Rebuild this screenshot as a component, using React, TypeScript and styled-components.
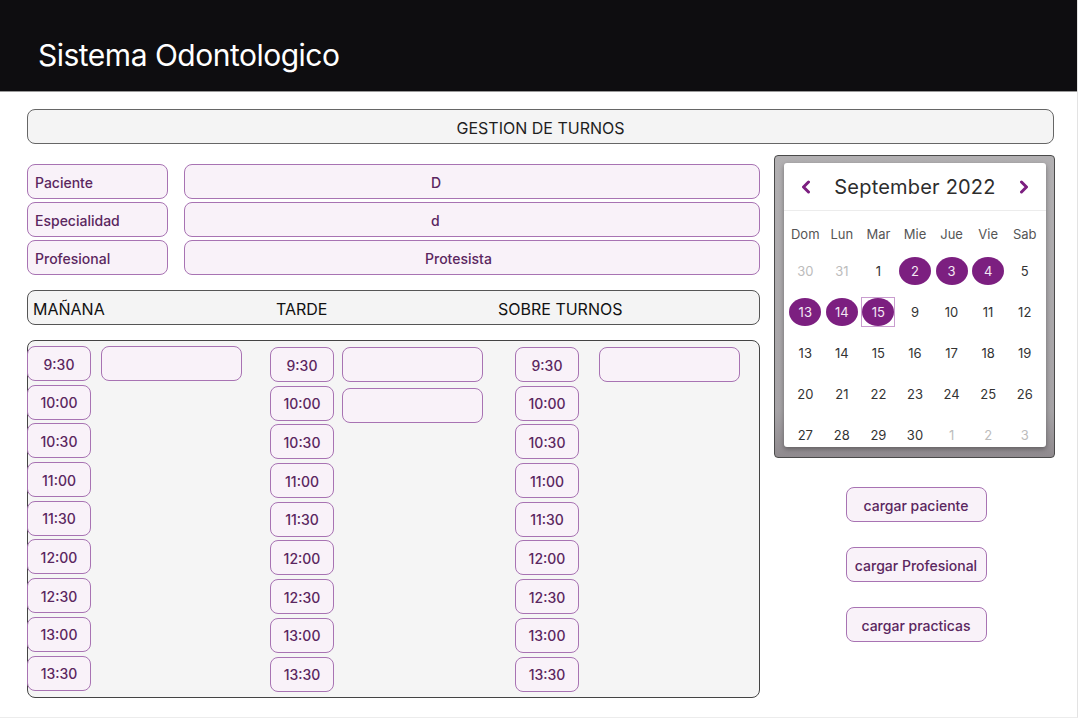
import React from 'react'
import styled, { createGlobalStyle } from 'styled-components'

const GlobalStyle = createGlobalStyle`
  body {
    margin: 0;
    background: #ffffff;
    font-family: Inter, 'Open Sans', 'Liberation Sans', sans-serif;
  }
`

const purpleBorder = '#a873b3'
const purpleBg = '#f9f2f9'
const purpleText = '#5b2760'

const Frame = styled.div`
  width: 1078px;
  height: 718px;
  box-sizing: border-box;
  border-right: 1px solid #e3e3e3;
  border-bottom: 1px solid #ececec;
  display: flex;
  flex-direction: column;
`

const TopBar = styled.header`
  height: 92px;
  background: #0e0d10;
  border-bottom: 1px solid #9a9a9a;
  box-sizing: border-box;
  display: flex;
  align-items: center;
  padding: 18px 0 0 38px;
`

const Brand = styled.h1`
  margin: 0;
  color: #ffffff;
  font-size: 30px;
  font-weight: 400;
  letter-spacing: -0.5px;
`

const Content = styled.main`
  padding: 17px 23px 0 27px;
`

const TitleBar = styled.div`
  height: 35px;
  box-sizing: border-box;
  border: 1.5px solid #666;
  border-radius: 8px;
  background: #f4f4f4;
  display: flex;
  align-items: center;
  justify-content: center;
  padding-top: 2px;
  font-size: 16px;
  color: #1e1e1e;
`

const Columns = styled.div`
  display: grid;
  grid-template-columns: 733px 281px;
  column-gap: 14px;
  align-items: start;
  margin-top: 11px;
`

const LeftCol = styled.div`
  padding-top: 9px;
  display: flex;
  flex-direction: column;
`

const Form = styled.div`
  display: grid;
  grid-template-columns: 141px 576px;
  column-gap: 16px;
  row-gap: 3px;
`

const PurpleBox = styled.div`
  height: 35px;
  box-sizing: border-box;
  border: 1.3px solid ${purpleBorder};
  border-radius: 8px;
  background: ${purpleBg};
  color: ${purpleText};
  font-size: 14px;
  font-weight: 500;
  display: flex;
  align-items: center;
  padding-top: 1px;
`

const Label = styled(PurpleBox)`
  padding-left: 7px;
`

const Value = styled(PurpleBox)<{ $indent: number }>`
  padding-left: ${(p) => p.$indent}px;
`

const ShiftBar = styled.div`
  margin-top: 15px;
  height: 35px;
  box-sizing: border-box;
  border: 1.5px solid #555;
  border-radius: 8px;
  background: #f4f4f4;
  display: grid;
  grid-template-columns: 243px 222px 1fr;
  align-items: center;
  padding: 3px 0 0 5px;
  font-size: 16px;
  color: #111;
`

const SlotPanel = styled.div`
  margin-top: 15px;
  height: 358px;
  box-sizing: border-box;
  border: 1.3px solid #444;
  border-radius: 8px;
  background: #f5f5f5;
  display: grid;
  grid-template-columns: 243px 245px 1fr;
  padding-top: 5px;
`

const SlotColumn = styled.div<{ $gap: number; $top: number }>`
  display: flex;
  gap: ${(p) => p.$gap}px;
  align-items: flex-start;
  padding-top: ${(p) => p.$top}px;
  margin-left: -1px;
`

const TimeList = styled.div`
  display: flex;
  flex-direction: column;
  gap: 3.7px;
`

const TimeButton = styled(PurpleBox)`
  width: 64px;
  justify-content: center;
`

const InputList = styled.div`
  display: flex;
  flex-direction: column;
  gap: 6px;
`

const SlotInput = styled(PurpleBox)`
  width: 141px;
`

const RightCol = styled.div`
  display: flex;
  flex-direction: column;
  align-items: center;
`

const CalendarFrame = styled.div`
  width: 281px;
  height: 303px;
  box-sizing: border-box;
  border: 1.5px solid #4a4a4a;
  border-radius: 4px;
  background: linear-gradient(180deg, #b2b0b2 0%, #a6a3a6 85%, #8f8a8e 100%);
  padding: 7px 8px 0 9px;
`

const CalendarCard = styled.div`
  height: 284px;
  background: #ffffff;
  border-radius: 3px;
  box-shadow: 0 2px 5px rgba(0, 0, 0, 0.35);
  overflow: hidden;
`

const CalHeader = styled.div`
  height: 48px;
  border-bottom: 1px solid #ececec;
  display: flex;
  align-items: center;
  justify-content: space-between;
  padding: 1px 16px 0 16px;
  box-sizing: border-box;
`

const MonthTitle = styled.span`
  font-size: 20px;
  color: #2d2d2d;
  letter-spacing: 0.2px;
`

const CalGrid = styled.div`
  display: grid;
  grid-template-columns: repeat(7, 1fr);
  padding: 0 3px;
`

const WeekDay = styled.div`
  height: 39px;
  box-sizing: border-box;
  padding-top: 6px;
  display: flex;
  align-items: center;
  justify-content: center;
  font-size: 13px;
  color: #555;
`

const DayCell = styled.div`
  height: 41px;
  display: flex;
  align-items: center;
  justify-content: center;
`

const TodayMark = styled.span`
  display: flex;
  align-items: center;
  justify-content: center;
  border: 1.5px solid #c99dcf;
`

const Day = styled.span<{ $muted?: boolean; $selected?: boolean }>`
  width: 32px;
  height: 28px;
  display: flex;
  align-items: center;
  justify-content: center;
  font-size: 13px;
  border-radius: ${(p) => (p.$selected ? '50%' : '0')};
  background: ${(p) => (p.$selected ? '#7c1f80' : 'transparent')};
  color: ${(p) => (p.$selected ? '#f4e8f4' : p.$muted ? '#bcbcbc' : '#333')};
`

const ActionList = styled.div`
  margin: 29px 0 0 3px;
  display: flex;
  flex-direction: column;
  gap: 25px;
  align-items: center;
`

const ActionButton = styled(PurpleBox)`
  width: 141px;
  justify-content: center;
  font-size: 14px;
`

const Chevron: React.FC<{ dir: 'left' | 'right' }> = ({ dir }) => (
  <svg width="12" height="14" viewBox="0 0 12 14">
    <polyline
      points={dir === 'left' ? '8.5,2 3.5,7 8.5,12' : '3.5,2 8.5,7 3.5,12'}
      fill="none"
      stroke="#7c1f80"
      strokeWidth="3"
      strokeLinecap="round"
      strokeLinejoin="round"
    />
  </svg>
)

const times = ['9:30', '10:00', '10:30', '11:00', '11:30', '12:00', '12:30', '13:00', '13:30']

const weekDays = ['Dom', 'Lun', 'Mar', 'Mie', 'Jue', 'Vie', 'Sab']

type DayItem = { n: number; muted?: boolean; selected?: boolean; today?: boolean }

const days: DayItem[] = [
  { n: 30, muted: true },
  { n: 31, muted: true },
  { n: 1 },
  { n: 2, selected: true },
  { n: 3, selected: true },
  { n: 4, selected: true },
  { n: 5 },
  { n: 13, selected: true },
  { n: 14, selected: true },
  { n: 15, selected: true, today: true },
  { n: 9 },
  { n: 10 },
  { n: 11 },
  { n: 12 },
  ...[13, 14, 15, 16, 17, 18, 19, 20, 21, 22, 23, 24, 25, 26, 27, 28, 29, 30].map((n) => ({ n })),
  { n: 1, muted: true },
  { n: 2, muted: true },
  { n: 3, muted: true },
]

const slotColumns = [
  { gap: 10, top: 0, inputs: 1 },
  { gap: 8, top: 1, inputs: 2 },
  { gap: 20, top: 1, inputs: 1 },
]

export default function App() {
  return (
    <>
      <GlobalStyle />
      <Frame>
        <TopBar>
          <Brand>Sistema Odontologico</Brand>
        </TopBar>
        <Content>
          <TitleBar>GESTION DE TURNOS</TitleBar>
          <Columns>
            <LeftCol>
              <Form>
                <Label>Paciente</Label>
                <Value $indent={246}>D</Value>
                <Label>Especialidad</Label>
                <Value $indent={246}>d</Value>
                <Label>Profesional</Label>
                <Value $indent={240}>Protesista</Value>
              </Form>
              <ShiftBar>
                <span>MAÑANA</span>
                <span>TARDE</span>
                <span>SOBRE TURNOS</span>
              </ShiftBar>
              <SlotPanel>
                {slotColumns.map((col, i) => (
                  <SlotColumn key={i} $gap={col.gap} $top={col.top}>
                    <TimeList>
                      {times.map((t) => (
                        <TimeButton key={t}>{t}</TimeButton>
                      ))}
                    </TimeList>
                    <InputList>
                      {Array.from({ length: col.inputs }).map((_, j) => (
                        <SlotInput key={j} />
                      ))}
                    </InputList>
                  </SlotColumn>
                ))}
              </SlotPanel>
            </LeftCol>
            <RightCol>
              <CalendarFrame>
                <CalendarCard>
                  <CalHeader>
                    <Chevron dir="left" />
                    <MonthTitle>September 2022</MonthTitle>
                    <Chevron dir="right" />
                  </CalHeader>
                  <CalGrid>
                    {weekDays.map((w) => (
                      <WeekDay key={w}>{w}</WeekDay>
                    ))}
                    {days.map((d, i) => {
                      const day = (
                        <Day $muted={d.muted} $selected={d.selected}>
                          {d.n}
                        </Day>
                      )
                      return <DayCell key={i}>{d.today ? <TodayMark>{day}</TodayMark> : day}</DayCell>
                    })}
                  </CalGrid>
                </CalendarCard>
              </CalendarFrame>
              <ActionList>
                <ActionButton>cargar paciente</ActionButton>
                <ActionButton>cargar Profesional</ActionButton>
                <ActionButton>cargar practicas</ActionButton>
              </ActionList>
            </RightCol>
          </Columns>
        </Content>
      </Frame>
    </>
  )
}
